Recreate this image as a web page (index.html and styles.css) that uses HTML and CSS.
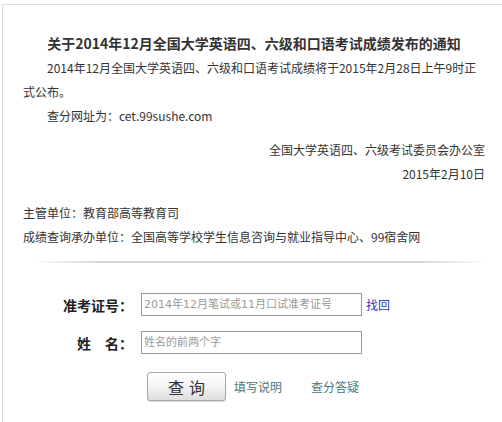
FILE: index.html
```html
<html>
<head>
    <meta charset="utf-8">
    <title>CET 成绩查询</title>
    <link rel="stylesheet" href="styles.css">
</head>
<body>
<div class="page">
    <div class="notice">
        <h1 class="notice-title">关于2014年12月全国大学英语四、六级和口语考试成绩发布的通知</h1>
        <p class="notice-text">2014年12月全国大学英语四、六级和口语考试成绩将于2015年2月28日上午9时正式公布。</p>
        <p class="notice-text">查分网址为：cet.99sushe.com</p>
        <div class="notice-sign">
            <p>全国大学英语四、六级考试委员会办公室</p>
            <p>2015年2月10日</p>
        </div>
        <div class="notice-units">
            <p>主管单位：教育部高等教育司</p>
            <p>成绩查询承办单位：全国高等学校学生信息咨询与就业指导中心、99宿舍网</p>
        </div>
    </div>
    <div class="divider"></div>
    <form class="query-form">
        <div class="form-row">
            <label class="form-label" for="zkzh">准考证号：</label>
            <input type="text" id="zkzh" class="form-input" placeholder="2014年12月笔试或11月口试准考证号">
            <a href="#" class="find-link">找回</a>
        </div>
        <div class="form-row">
            <label class="form-label" for="xm">姓&emsp;名：</label>
            <input type="text" id="xm" class="form-input" placeholder="姓名的前两个字">
        </div>
        <div class="form-row form-actions">
            <button type="button" class="submit-btn">查询</button>
            <a href="#" class="help-link">填写说明</a>
            <a href="#" class="help-link">查分答疑</a>
        </div>
    </form>
</div>
</body>
</html>
```

FILE: styles.css
```css
body {
    margin: 0;
    background: #fff;
    font-family: "Noto Sans CJK SC", "Noto Sans", sans-serif;
    color: #333;
}

p {
    margin: 0;
}

.page {
    margin: 4px 0 0 2px;
    border: 1px solid #dcdcdc;
    border-right: none;
    padding: 25px 17px 12px 20px;
}

.notice-title {
    margin: 0;
    font-size: 14px;
    line-height: 26px;
    font-weight: bold;
    text-align: center;
    color: #333;
}

.notice-text {
    font-size: 12px;
    line-height: 24px;
    text-indent: 2em;
}

.notice-sign {
    margin-top: 10px;
    font-size: 12px;
    line-height: 24px;
    text-align: right;
}

.notice-units {
    margin-top: 15px;
    font-size: 12px;
    line-height: 24px;
}

.divider {
    height: 2px;
    margin: 12px -5px 0 7px;
    background: linear-gradient(to right, rgba(200, 208, 208, 0), #d3d9d9 15%, #d3d9d9 85%, rgba(200, 208, 208, 0));
}

.query-form {
    padding-top: 30px;
}

.form-row {
    display: flex;
    align-items: center;
    height: 23px;
    margin-bottom: 15px;
}

.form-label {
    width: 110px;
    text-align: right;
    font-size: 14px;
    font-weight: bold;
    color: #222;
}

.form-input {
    width: 221px;
    height: 23px;
    box-sizing: border-box;
    margin: 0 0 0 8px;
    padding: 0 2px;
    border: 1px solid #999;
    font-family: "DejaVu Sans", "Noto Sans CJK SC", sans-serif;
    font-size: 11px;
    color: #333;
    outline: none;
}

.form-input::placeholder {
    color: #9a9a9a;
}

.find-link {
    margin-left: 4px;
    font-size: 12px;
    color: #2a3cb8;
    text-decoration: none;
}

.form-actions {
    height: 29px;
    margin: 18px 0 0;
    padding-left: 124px;
}

.submit-btn {
    width: 79px;
    height: 29px;
    border: 1px solid #a8a8a8;
    border-radius: 3px;
    background: linear-gradient(#ffffff, #f4f4f4 50%, #dedede);
    box-shadow: 0 1px 1px rgba(0, 0, 0, .15);
    font-family: "Noto Sans CJK SC", sans-serif;
    font-size: 16px;
    letter-spacing: 5px;
    padding: 0 0 0 5px;
    color: #333;
}

.help-link {
    margin-left: 8px;
    font-size: 12px;
    color: #4a7a7a;
    text-decoration: none;
}

.help-link + .help-link {
    margin-left: 29px;
}
```
